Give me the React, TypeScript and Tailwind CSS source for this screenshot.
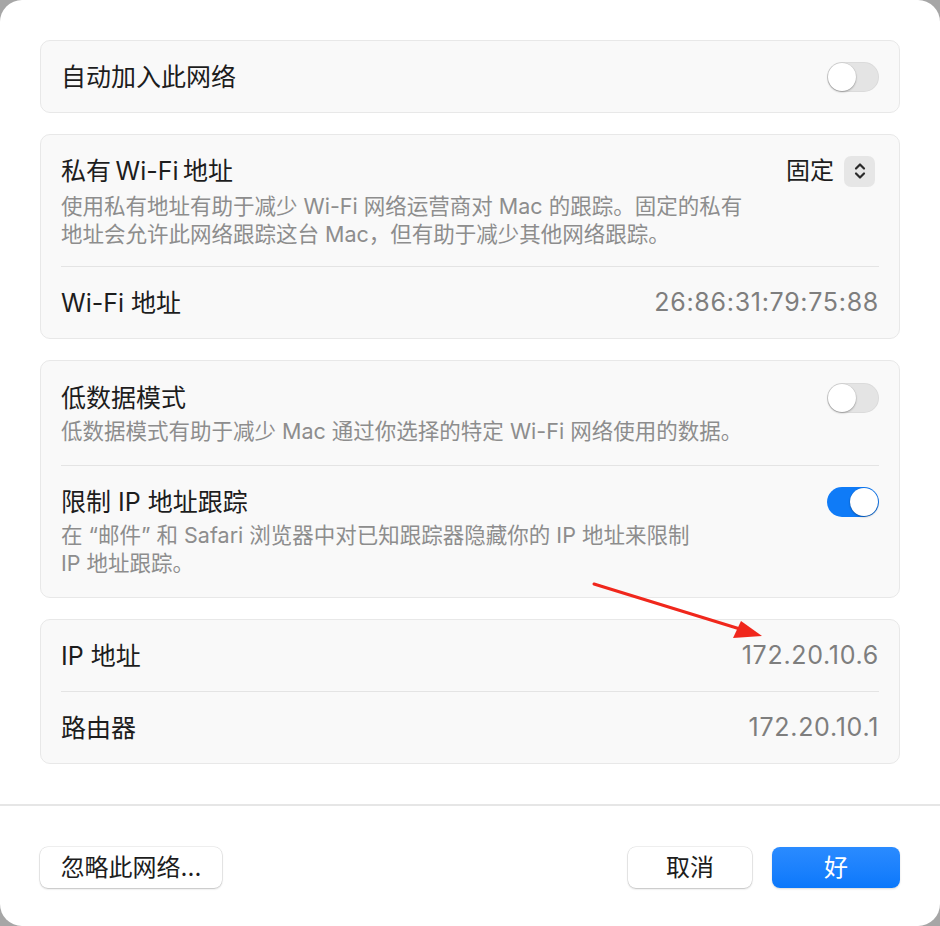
import React from "react";

const FONT = { fontFamily: '"Inter", "Noto Sans CJK SC", "Noto Sans", sans-serif' };

function Toggle({ on }: { on?: boolean }) {
  return (
    <div
      className={
        "relative h-[30px] w-[52px] shrink-0 rounded-full " +
        (on ? "bg-[#0f7bf7]" : "bg-[#e4e4e4] shadow-[inset_0_0_0_1px_rgba(0,0,0,0.04)]")
      }
    >
      <div
        className={
          "absolute top-[1px] h-[28px] w-[28px] rounded-full bg-white shadow-[0_1px_2px_rgba(0,0,0,0.3),0_0_0_0.5px_rgba(0,0,0,0.08)] " +
          (on ? "right-[1px]" : "left-[1px]")
        }
      />
    </div>
  );
}

function Card({ children }: { children: React.ReactNode }) {
  return (
    <div className="rounded-[10px] border border-[#e8e8e8] bg-[#f9f9f9] px-[20px]">{children}</div>
  );
}

function Divider() {
  return <div className="h-px bg-[#e4e4e4]" />;
}

function Title({ children }: { children: React.ReactNode }) {
  return <div className="text-[25px] leading-[32px] text-[#1d1d1d]">{children}</div>;
}

function Sub({ children }: { children: React.ReactNode }) {
  return <div className="mt-[3px] text-[21.5px] leading-[28px] text-[#8d8d8d]">{children}</div>;
}

function ValueRow({ label, value }: { label: string; value: string }) {
  return (
    <div className="flex h-[71px] items-center justify-between">
      <Title>{label}</Title>
      <div className="text-[25px] tracking-[0.7px] text-[#7e7e7e]">{value}</div>
    </div>
  );
}

export default function App() {
  return (
    <div className="h-[926px] w-[940px] bg-[#a6a6a6]" style={FONT}>
      <div className="relative flex h-full w-full flex-col rounded-[22px] bg-white">
        <div className="flex flex-col gap-[21px] px-[40px] pt-[40px]">
          <Card>
            <div className="flex h-[71px] items-center justify-between">
              <Title>自动加入此网络</Title>
              <Toggle />
            </div>
          </Card>

          <Card>
            <div className="flex h-[131px] flex-col justify-center">
              <div className="flex items-center justify-between">
                <Title>私有&#8201;Wi-Fi&#8201;地址</Title>
                <div className="mr-[4px] flex items-center gap-[10px]">
                  <span className="text-[24px] text-[#1d1d1d]">固定</span>
                  <div className="flex h-[31px] w-[31px] items-center justify-center rounded-[7px] bg-[#e6e6e6]">
                    <svg width="14" height="20" viewBox="0 0 14 20" fill="none">
                      <path d="M3 7.5 L7 3.5 L11 7.5" stroke="#2a2a2a" strokeWidth="2.2" strokeLinecap="round" strokeLinejoin="round" />
                      <path d="M3 12.5 L7 16.5 L11 12.5" stroke="#2a2a2a" strokeWidth="2.2" strokeLinecap="round" strokeLinejoin="round" />
                    </svg>
                  </div>
                </div>
              </div>
              <Sub>
                使用私有地址有助于减少 Wi-Fi 网络运营商对 Mac 的跟踪。固定的私有
                <br />
                地址会允许此网络跟踪这台 Mac，但有助于减少其他网络跟踪。
              </Sub>
            </div>
            <Divider />
            <ValueRow label="Wi-Fi 地址" value="26:86:31:79:75:88" />
          </Card>

          <Card>
            <div className="flex h-[104px] flex-col justify-center">
              <div className="flex items-center justify-between">
                <Title>低数据模式</Title>
                <Toggle />
              </div>
              <Sub>低数据模式有助于减少 Mac 通过你选择的特定 Wi-Fi 网络使用的数据。</Sub>
            </div>
            <Divider />
            <div className="flex h-[131px] flex-col justify-center">
              <div className="flex items-center justify-between">
                <Title>限制 IP 地址跟踪</Title>
                <Toggle on />
              </div>
              <Sub>
                在 “邮件” 和 Safari 浏览器中对已知跟踪器隐藏你的 IP 地址来限制
                <br />
                IP 地址跟踪。
              </Sub>
            </div>
          </Card>

          <Card>
            <ValueRow label="IP 地址" value="172.20.10.6" />
            <Divider />
            <ValueRow label="路由器" value="172.20.10.1" />
          </Card>
        </div>

        <div className="mt-[40px] h-[2px] bg-[#e6e6e6]" />

        <div className="flex items-center justify-between px-[40px] pt-[41px]">
          <button className="h-[41px] w-[182px] rounded-[8px] bg-white text-[24px] text-[#1d1d1d] shadow-[0_0_0_0.5px_rgba(0,0,0,0.12),0_1px_2px_rgba(0,0,0,0.2)]">
            忽略此网络...
          </button>
          <div className="flex gap-[20px]">
            <button className="h-[41px] w-[124px] rounded-[8px] bg-white text-[24px] text-[#1d1d1d] shadow-[0_0_0_0.5px_rgba(0,0,0,0.12),0_1px_2px_rgba(0,0,0,0.2)]">
              取消
            </button>
            <button className="h-[41px] w-[128px] rounded-[8px] bg-gradient-to-b from-[#2a8bff] to-[#0a78fb] text-[24px] text-white shadow-[0_1px_2px_rgba(0,0,0,0.15)]">
              好
            </button>
          </div>
        </div>

        <svg className="pointer-events-none absolute left-0 top-0" width="940" height="926">
          <line x1="594" y1="584" x2="740" y2="629" stroke="#f0271c" strokeWidth="3" strokeLinecap="round" />
          <polygon points="762,636 733,638 741,621" fill="#f0271c" />
        </svg>
      </div>
    </div>
  );
}
